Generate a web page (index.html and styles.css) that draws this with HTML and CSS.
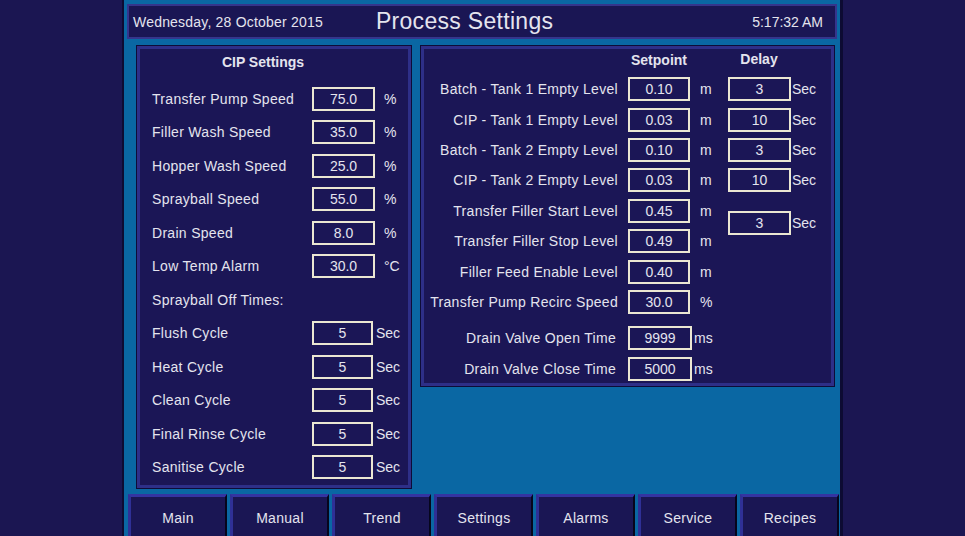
FILE: index.html
```html
<!DOCTYPE html>
<html lang="en">
<head>
  <meta charset="UTF-8">
  <meta name="viewport" content="width=device-width, initial-scale=1.0">
  <title>Process Settings</title>
  <link rel="stylesheet" href="styles.css">
</head>
<body>
  <div class="screen">
    <header class="title-bar">
      <span class="date">Wednesday, 28 October 2015</span>
      <h1>Process Settings</h1>
      <span class="clock">5:17:32 AM</span>
    </header>

    <div class="main">
      <section class="panel cip">
        <h2>CIP Settings</h2>
        <div class="row"><span class="label">Transfer Pump Speed</span><span class="field">75.0</span><span class="unit">%</span></div>
        <div class="row"><span class="label">Filler Wash Speed</span><span class="field">35.0</span><span class="unit">%</span></div>
        <div class="row"><span class="label">Hopper Wash Speed</span><span class="field">25.0</span><span class="unit">%</span></div>
        <div class="row"><span class="label">Sprayball Speed</span><span class="field">55.0</span><span class="unit">%</span></div>
        <div class="row"><span class="label">Drain Speed</span><span class="field">8.0</span><span class="unit">%</span></div>
        <div class="row"><span class="label">Low Temp Alarm</span><span class="field">30.0</span><span class="unit">&deg;C</span></div>
        <div class="row"><span class="label">Sprayball Off Times:</span></div>
        <div class="row"><span class="label">Flush Cycle</span><span class="field short">5</span><span class="unit sec">Sec</span></div>
        <div class="row"><span class="label">Heat Cycle</span><span class="field short">5</span><span class="unit sec">Sec</span></div>
        <div class="row"><span class="label">Clean Cycle</span><span class="field short">5</span><span class="unit sec">Sec</span></div>
        <div class="row"><span class="label">Final Rinse Cycle</span><span class="field short">5</span><span class="unit sec">Sec</span></div>
        <div class="row"><span class="label">Sanitise Cycle</span><span class="field short">5</span><span class="unit sec">Sec</span></div>
      </section>

      <section class="panel levels">
        <span class="col-head setpoint">Setpoint</span>
        <span class="col-head delay-head">Delay</span>

        <span class="name">Batch - Tank 1 Empty Level</span><span class="field sp">0.10</span><span class="u">m</span>
        <span class="field delay">3</span><span class="sec-u">Sec</span>

        <span class="name">CIP - Tank 1 Empty Level</span><span class="field sp">0.03</span><span class="u">m</span>
        <span class="field delay">10</span><span class="sec-u">Sec</span>

        <span class="name">Batch - Tank 2 Empty Level</span><span class="field sp">0.10</span><span class="u">m</span>
        <span class="field delay">3</span><span class="sec-u">Sec</span>

        <span class="name">CIP - Tank 2 Empty Level</span><span class="field sp">0.03</span><span class="u">m</span>
        <span class="field delay">10</span><span class="sec-u">Sec</span>

        <span class="name">Transfer Filler Start Level</span><span class="field sp">0.45</span><span class="u">m</span>
        <span class="field delay shared">3</span><span class="sec-u shared">Sec</span>

        <span class="name">Transfer Filler Stop Level</span><span class="field sp">0.49</span><span class="u">m</span>

        <span class="name">Filler Feed Enable Level</span><span class="field sp">0.40</span><span class="u">m</span>

        <span class="name">Transfer Pump Recirc Speed</span><span class="field sp">30.0</span><span class="u">%</span>

        <span class="name gap">Drain Valve Open Time</span><span class="field sp wide gap">9999</span><span class="u ms gap">ms</span>

        <span class="name inset">Drain Valve Close Time</span><span class="field sp wide">5000</span><span class="u ms">ms</span>
      </section>
    </div>

    <nav class="tabs">
      <button class="tab">Main</button>
      <button class="tab">Manual</button>
      <button class="tab">Trend</button>
      <button class="tab">Settings</button>
      <button class="tab">Alarms</button>
      <button class="tab">Service</button>
      <button class="tab">Recipes</button>
    </nav>
  </div>
</body>
</html>
```

FILE: styles.css
```css
html, body {
  margin: 0;
  padding: 0;
  height: 100%;
  overflow: hidden;
}
body {
  background: #1b1652;
  font-family: 'Liberation Sans', Arial, sans-serif;
  font-size: 14px;
  color: #e4e4ee;
}
.screen {
  margin-left: 122px;
  width: 721px;
  height: 536px;
  background: #0a67a3;
  border-left: 2px solid #0d0b33;
  border-right: 3px solid #0d0b33;
  box-sizing: border-box;
  display: flex;
  flex-direction: column;
  padding-top: 4px;
}

/* title bar */
.title-bar {
  height: 35px;
  margin: 0 3px;
  background: #1a1654;
  border: 2px solid #35358c;
  box-sizing: border-box;
  display: flex;
  align-items: center;
  padding: 0 12px 0 4px;
}
.title-bar .date {
  font-size: 14px;
  letter-spacing: 0.2px;
}
.title-bar h1 {
  margin: 0 0 0 53px;
  font-size: 23px;
  font-weight: normal;
  letter-spacing: 0.3px;
}
.title-bar .clock {
  margin-left: auto;
  font-size: 14px;
}

.main {
  display: flex;
  gap: 10px;
  padding: 7px 0 0 13px;
  align-items: flex-start;
}
.panel {
  background: #1b1656;
  border: 3px solid #2e2f88;
  outline: 1px solid #0e0c38;
  box-sizing: border-box;
}

/* left panel */
.cip {
  width: 274px;
  height: 442px;
  padding: 3px 0 0 12px;
}
.cip h2 {
  margin: 0 0 10px;
  font-size: 14px;
  line-height: 20px;
  text-align: center;
  padding-right: 34px;
}
.row {
  display: flex;
  align-items: center;
  height: 33.5px;
}
.row .label {
  width: 160px;
  letter-spacing: 0.3px;
}
.field {
  box-sizing: border-box;
  width: 63px;
  height: 24px;
  border: 2px solid #ebe7d2;
  text-align: center;
  line-height: 20px;
}
.field.short {
  width: 61px;
}
.row .unit {
  padding-left: 9px;
}
.row .unit.sec {
  padding-left: 3px;
}

/* right panel */
.levels {
  width: 413px;
  height: 340px;
  padding: 0 0 0 6px;
  display: grid;
  grid-template-columns: 198px 62px 38px 62px 40px;
  grid-template-rows: 25px repeat(8, 30.4px) 36.2px 31px;
  align-items: center;
}
.col-head {
  font-weight: bold;
  justify-self: center;
  white-space: nowrap;
  padding-bottom: 3px;
}
.setpoint { grid-column: 2; }
.delay-head { grid-column: 4; padding-bottom: 5px; }
.name {
  grid-column: 1;
  text-align: right;
  padding-right: 10px;
  white-space: nowrap;
  letter-spacing: 0.3px;
}
.name.inset {
  padding-right: 12px;
}
.field.sp { grid-column: 2; width: 62px; }
.field.wide { width: 64px; }
.u {
  grid-column: 3;
  padding-left: 10px;
}
.u.ms { padding-left: 4px; }
.gap { margin-top: 6px; }
.name.gap { padding-right: 12px; }
.field.delay { grid-column: 4; }
.sec-u {
  grid-column: 5;
  padding-left: 2px;
}
.shared {
  grid-row: span 2;
  margin-bottom: 6px;
}

/* bottom navigation */
.tabs {
  margin-top: auto;
  display: grid;
  grid-template-columns: repeat(7, 1fr);
  gap: 3px;
  padding: 0 1px 0 4px;
  height: 42px;
}
.tab {
  font-family: inherit;
  font-size: 14px;
  color: #e4e4ee;
  background: #1a1654;
  border-style: solid;
  border-width: 3px 2px 0 3px;
  border-color: #3434a2 #06061c #1a1654 #2f3096;
  padding: 2px 0 0;
  letter-spacing: 0.3px;
  cursor: pointer;
}
```
